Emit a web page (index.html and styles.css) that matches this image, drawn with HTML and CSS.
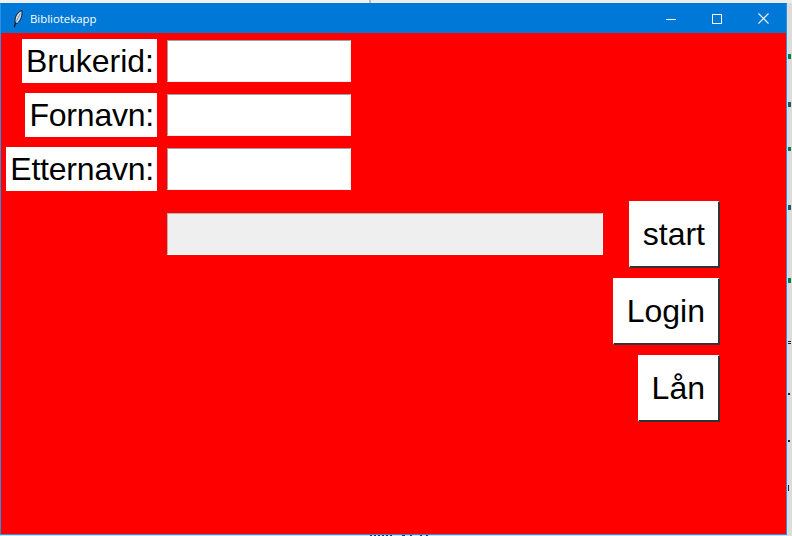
FILE: index.html
```html
<!DOCTYPE html>
<html lang="en">
<head>
    <meta charset="UTF-8">
    <meta name="viewport" content="width=device-width, initial-scale=1.0">
    <title>Bibliotekapp</title>
    <link rel="stylesheet" href="styles.css">
</head>
<body>
    <div class="desktop-strip"></div>
    <!-- bits of the editor behind the window -->
    <svg class="desktop-bits" viewBox="0 0 792 536" width="792" height="536">
        <g fill="#0a7a4a">
            <rect x="788" y="54" width="3" height="5"/>
            <rect x="788" y="147" width="3" height="4"/>
            <rect x="788" y="278" width="3" height="5"/>
        </g>
        <g fill="#1a5a6a">
            <rect x="788" y="102" width="3" height="5"/>
            <rect x="788" y="205" width="3" height="5"/>
        </g>
        <g fill="#222">
            <rect x="788" y="341" width="3" height="1"/>
            <rect x="788" y="343" width="3" height="1"/>
            <rect x="788" y="393" width="2" height="2"/>
            <rect x="788" y="440" width="2" height="2"/>
            <rect x="788" y="485" width="1" height="6"/>
        </g>
        <g fill="#333">
            <rect x="370" y="535" width="2" height="1"/>
            <rect x="374" y="535" width="2" height="1"/>
            <rect x="378" y="535" width="2" height="1"/>
            <rect x="382" y="535" width="2" height="1"/>
            <rect x="386" y="535" width="2" height="1"/>
            <rect x="390" y="535" width="2" height="1"/>
            <rect x="402" y="535" width="3" height="1"/>
            <rect x="410" y="535" width="2" height="1"/>
            <rect x="420" y="535" width="2" height="1"/>
            <rect x="426" y="535" width="2" height="1"/>
        </g>
    </svg>
    <div class="window">
        <div class="titlebar">
            <svg class="feather" viewBox="0 0 10 18" width="10" height="18">
                <path d="M1.3 17 L3 11" stroke="#0b1420" stroke-width="1.2" fill="none"/>
                <path d="M2.4 13 C1 8.5 3.6 2.5 8.8 .5 C9.6 4.5 8.2 10 4.2 13.4 Z" fill="#cfe0f2" stroke="#0b1420" stroke-width="1"/>
                <path d="M3.2 11.5 L7.4 3.5" stroke="#5a6a80" stroke-width=".8" fill="none"/>
            </svg>
            <span class="title">Bibliotekapp</span>
            <div class="controls">
                <div class="control">
                    <svg viewBox="0 0 10 10" width="10" height="10"><path d="M0 5.5 H10" stroke="#fff" stroke-width="1"/></svg>
                </div>
                <div class="control">
                    <svg viewBox="0 0 10 10" width="10" height="10"><rect x=".5" y=".5" width="9" height="9" fill="none" stroke="#fff" stroke-width="1"/></svg>
                </div>
                <div class="control">
                    <svg viewBox="0 0 11 11" width="11" height="11"><path d="M.5 .5 L10.5 10.5 M10.5 .5 L.5 10.5" stroke="#fff" stroke-width="1.1"/></svg>
                </div>
            </div>
        </div>
        <div class="content">
            <label class="field-label">Brukerid:</label>
            <input class="entry" type="text">
            <label class="field-label field-label-tight">Fornavn:</label>
            <input class="entry" type="text">
            <label class="field-label field-label-tight">Etternavn:</label>
            <input class="entry" type="text">
            <div class="progress"></div>
            <button class="btn btn-start">start</button>
            <button class="btn btn-login">Login</button>
            <button class="btn btn-loan">Lån</button>
        </div>
    </div>
</body>
</html>
```

FILE: styles.css
```css
* {
    box-sizing: border-box;
}

html, body {
    height: 100%;
}

body {
    margin: 0;
    overflow: hidden;
    position: relative;
    background-color: #dcdcdc;
    font-family: "Liberation Sans", Arial, sans-serif;
}

.desktop-strip {
    position: absolute;
    top: 0;
    left: 0;
    width: 100%;
    height: 3px;
    background: linear-gradient(to right, #f1f1f1 369px, #bdbdbd 369px, #bdbdbd 371px, #ececec 371px);
}

.desktop-bits {
    position: absolute;
    top: 0;
    left: 0;
}

.window {
    position: absolute;
    top: 3px;
    left: 0;
    width: 787px;
    height: 532px;
    display: flex;
    flex-direction: column;
    border: 1px solid #2b8fe3;
    border-top-color: #0078d7;
    background-color: #ff0000;
}

.titlebar {
    height: 29px;
    flex: none;
    display: flex;
    align-items: center;
    padding-left: 12px;
    background-color: #0078d7;
    color: #fff;
}

.feather {
    flex: none;
}

.title {
    margin-left: 7px;
    font-family: "Open Sans", sans-serif;
    font-size: 11.4px;
}

.controls {
    display: flex;
    margin-left: auto;
}

.control {
    width: 46px;
    height: 29px;
    display: flex;
    align-items: center;
    justify-content: center;
}

.content {
    display: grid;
    grid-template-columns: 156px 184px 242px 107px;
    grid-template-rows: repeat(3, 44px) repeat(3, 67px);
    gap: 10px;
    padding-top: 6px;
}

.field-label {
    grid-column: 1;
    justify-self: end;
    padding: 0 3px 0 4px;
    background-color: #fff;
    color: #000;
    font-size: 32px;
    line-height: 44px;
}

.field-label-tight {
    letter-spacing: -0.22px;
}

.entry {
    grid-column: 2;
    align-self: center;
    height: 42px;
    width: 100%;
    margin: 0;
    border: 1px solid;
    border-color: #a0a0a0 #f0f0f0 #f0f0f0 #a0a0a0;
    background-color: #fff;
    outline: none;
}

.progress {
    grid-column: 2 / 4;
    grid-row: 4;
    align-self: start;
    height: 42px;
    margin-top: 12px;
    border: 1px solid;
    border-color: #b4b4b4 #fff #fff #b4b4b4;
    background-color: #efefef;
}

.btn {
    grid-column: 4;
    justify-self: end;
    padding: 0 13px;
    border: 1px solid;
    border-color: #fff #333 #333 #fff;
    border-right-width: 2px;
    border-bottom-width: 2px;
    background-color: #fff;
    color: #000;
    font-family: inherit;
    font-size: 32px;
}

.btn-start {
    grid-row: 4;
}

.btn-login {
    grid-row: 5;
}

.btn-loan {
    grid-row: 6;
}
```
